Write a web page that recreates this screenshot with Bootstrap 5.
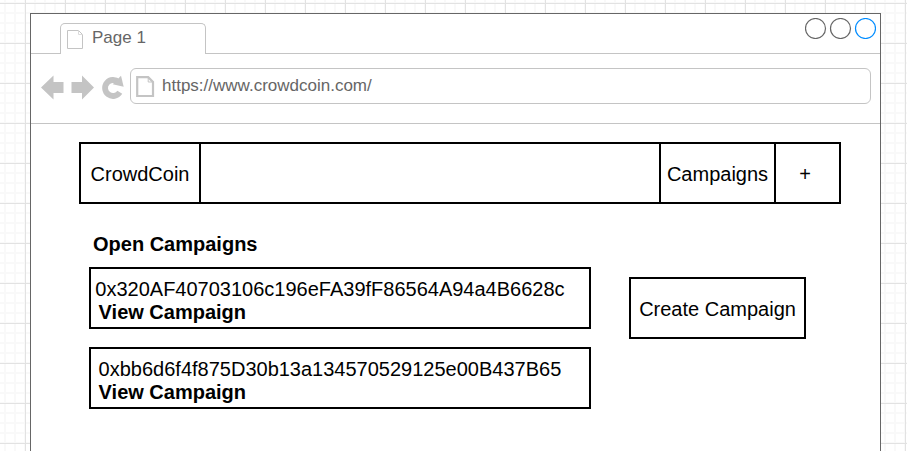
<!DOCTYPE html>
<html lang="en">
<head>
<meta charset="utf-8">
<title>CrowdCoin</title>
<link href="https://cdn.jsdelivr.net/npm/bootstrap@5.3.0/dist/css/bootstrap.min.css" rel="stylesheet">
<style>
html, body { height: 100%; }
body {
  font: 20px/23px "Liberation Sans", Arial, sans-serif;
  color: #000;
  padding: 13px 26px 0 30px;
  background-color: #fff;
  background-image:
    linear-gradient(#e2e2e2 1px, transparent 1px),
    linear-gradient(90deg, #e2e2e2 1px, transparent 1px),
    linear-gradient(#f9f9f9 2px, transparent 2px),
    linear-gradient(90deg, #f9f9f9 2px, transparent 2px);
  background-size: 40px 40px, 40px 40px, 10px 10px, 10px 10px;
  background-position: 0 3px, 25px 0, 0 2px, 4px 0;
}
.browser { border: 1px solid #666; border-bottom: 0; }
.tab-strip { height: 40px; }
.rule { border-bottom: 1px solid #c4c4c4; }
.tab-lead { width: 29px; }
.page-tab { width: 146px; margin-top: 9px; padding: 0 0 2px 6px; border: 1px solid #c4c4c4; border-bottom: 0; border-radius: 5px 5px 0 0; }
.tab-icon { margin-top: 6px; }
.chrome-text { font-size: 17px; line-height: 20px; color: #666; }
.window-dots { padding: 4px 4px 0 0; }
.toolbar { height: 70px; padding: 14px 9px 0 10px; }
.address { height: 36px; border: 1px solid #c4c4c4; border-radius: 6px; padding-left: 5px; }
.address-text { padding: 7px 0 0 7px; }
.site { padding: 18px 39px 0 48px; }
.box { border: 2px solid #000; height: 62px; }
.cell { border-right: 2px solid #000; }
.label { padding-top: 2px; }
.brand-cell { width: 120px; }
.link-cell { width: 115px; }
.plus-cell { width: 63px; padding-right: 5px; }
.heading { margin: 29px 0 11px 14px; font-size: 20px; line-height: 23px; }
.campaigns { width: 502px; margin-left: 10px; gap: 18px; }
.entry { padding: 9px 0 0 7.6px; }
.entry-wide { padding-left: 4.3px; }
.entry-wide .fw-bold { padding-left: 3.3px; }
.create { width: 177px; margin: 10px 0 0 38px; }
</style>
<script src="https://cdn.jsdelivr.net/npm/bootstrap@5.3.0/dist/js/bootstrap.bundle.min.js"></script>
</head>
<body class="overflow-hidden">
<div class="browser bg-white h-100">
  <div class="tab-strip d-flex">
    <div class="tab-lead rule flex-shrink-0"></div>
    <div class="page-tab d-flex flex-shrink-0">
      <svg class="tab-icon flex-shrink-0" width="17" height="20" fill="none" stroke="#c4c4c4"><path d="M.5.5h11l4 4v14H.5z"/><path d="M11.5.5v4h4" stroke="#dcdcdc"/></svg>
      <span class="chrome-text ps-2 pt-1">Page 1</span>
    </div>
    <div class="rule flex-grow-1 d-flex justify-content-end window-dots">
      <svg width="71" height="21" fill="none" stroke="#666" stroke-width="1.2">
        <circle cx="10.500" cy="10.500" r="10"/>
        <circle cx="35.500" cy="10.500" r="10"/>
        <circle cx="60.500" cy="10.500" r="10" stroke="#008cff"/>
      </svg>
    </div>
  </div>
  <div class="toolbar rule d-flex">
    <svg class="flex-shrink-0" width="89" height="36" fill="#c4c4c4">
      <path d="M0 19.500 12.500 7.500v6.500h10v11h-10v6.500z"/>
      <path d="M53 19.500 41 7.500v6.500H30.500v11H41v6.500z"/>
      <path d="M77.600 14.200A8 8 0 1 0 78.800 24.300" fill="none" stroke="#c4c4c4" stroke-width="5.800"/>
      <path d="M80 7.700 82.700 18.700 71.700 16.300z"/>
    </svg>
    <div class="address flex-grow-1 d-flex">
      <svg class="flex-shrink-0" width="19" height="34" fill="none" stroke="#c4c4c4" stroke-width="2.200"><path d="M1.200 8.200H12.200l4.800 4.800V27H1.200z"/><path d="M12.200 8.500v4.500h4.500" stroke-width="1"/></svg>
      <span class="chrome-text address-text">https://www.crowdcoin.com/</span>
    </div>
  </div>
  <main class="site">
    <nav class="box d-flex text-center align-items-stretch">
      <div class="cell label brand-cell d-flex align-items-center justify-content-center">CrowdCoin</div>
      <div class="cell flex-grow-1"></div>
      <div class="cell label link-cell d-flex align-items-center justify-content-center">Campaigns</div>
      <div class="label plus-cell d-flex align-items-center justify-content-center">+</div>
    </nav>
    <h1 class="heading fw-bold">Open Campaigns</h1>
    <div class="d-flex align-items-start">
      <div class="campaigns d-flex flex-column flex-shrink-0">
        <div class="box entry entry-wide"><div>0x320AF40703106c196eFA39fF86564A94a4B6628c</div><div class="fw-bold">View Campaign</div></div>
        <div class="box entry"><div>0xbb6d6f4f875D30b13a134570529125e00B437B65</div><div class="fw-bold">View Campaign</div></div>
      </div>
      <div class="box create label d-flex align-items-center justify-content-center flex-shrink-0">Create Campaign</div>
    </div>
  </main>
</div>
</body>
</html>
